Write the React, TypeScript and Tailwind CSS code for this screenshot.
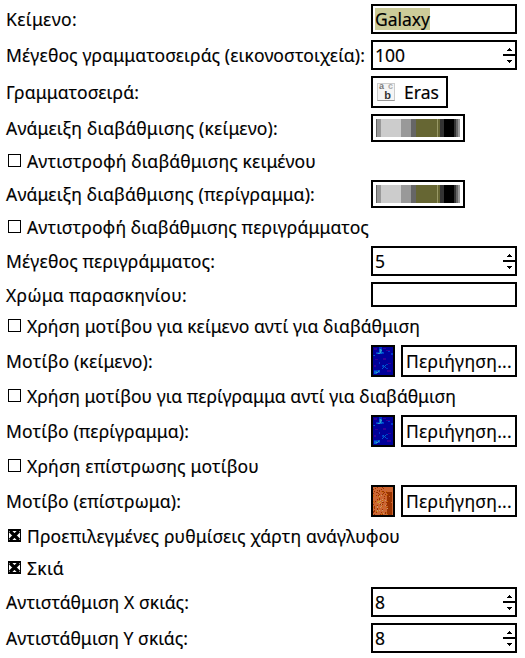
import { useLayoutEffect, useRef, useState } from 'react';
import type { ReactNode } from 'react';

function Label({ text, width }: { text: string; width: number }) {
  const ref = useRef<HTMLSpanElement>(null);
  const [spacing, setSpacing] = useState(0);
  useLayoutEffect(() => {
    if (ref.current) setSpacing((width - ref.current.getBoundingClientRect().width) / text.length);
  }, [text, width]);
  return (
    <span ref={ref} className="inline-block whitespace-pre leading-[26px]" style={{ letterSpacing: `${spacing}px` }}>
      {text}
    </span>
  );
}

function Row({ label, width, children }: { label: string; width: number; children: ReactNode }) {
  return (
    <div className="flex items-center">
      <div className="-my-1 w-[365px] shrink-0 h-[26px]">
        <Label text={label} width={width} />
      </div>
      {children}
    </div>
  );
}

function Check({ label, width, checked = false }: { label: string; width: number; checked?: boolean }) {
  return (
    <label className="flex h-[26px] items-center gap-[6px] pl-[2px]">
      <svg className="mb-px size-[13px] shrink-0" viewBox="0 0 13 13" shapeRendering="crispEdges">
        <path d="M.5.5h12v12H.5z" fill="white" stroke="black" />
        {checked && (
          <g shapeRendering="auto" stroke="black">
            <path d="M1 1.5h11M1 11.5h11" fill="none" strokeWidth="1" />
            <path d="M2 2l9 9M11 2l-9 9" strokeWidth="3.2" />
          </g>
        )}
      </svg>
      <Label text={label} width={width} />
    </label>
  );
}

function Spin({ value, width }: { value: string; width: number }) {
  return (
    <div className="flex h-[30px] w-[146px] items-center justify-between border-2 border-black pl-[2px]">
      <Label text={value} width={width} />
      <svg className="h-[26px] w-[12px]" viewBox="0 0 12 26" shapeRendering="crispEdges">
        <path d="M0 12h12v2H0zM6 6h1v1h1v1h1v1H4V8h1V7h1zM4 18h5v1H8v1H7v1H6v-1H5v-1H4z" />
      </svg>
    </div>
  );
}

function Gradient() {
  return (
    <div className="flex h-[28px] w-[94px] border-2 border-black p-[3px]">
      <div className="h-[18px] w-px bg-[#666]" />
      <div className="h-[18px] w-[4px] bg-[#999]" />
      <div className="h-[18px] w-[20px] bg-[#ccc]" />
      <div className="h-[18px] w-[10px] bg-[#999]" />
      <div className="h-[18px] w-[5px] bg-[#666]" />
      <div className="h-[18px] w-[21px] bg-[#663]" />
      <div className="h-[18px] w-px bg-[#996]" />
      <div className="h-[18px] w-[2px] bg-[#663]" />
      <div className="h-[18px] w-[4px] bg-[#333]" />
      <div className="h-[18px] w-[10px] bg-black" />
      <div className="h-[18px] w-[2px] bg-[#333]" />
      <div className="h-[18px] w-[2px] bg-[#666]" />
      <div className="h-[18px] w-[2px] bg-[#999]" />
    </div>
  );
}

function Browse({ rust = false }: { rust?: boolean }) {
  return (
    <div className="flex gap-[6px]">
      <div className="h-8 w-6 border-2 border-black">
        {rust ? <Rust /> : <Nebula />}
      </div>
      <button className="flex h-8 w-[116px] items-center border-2 border-black pl-[3px]">
        <Label text="Περιήγηση..." width={106} />
      </button>
    </div>
  );
}

function Nebula() {
  return (
    <svg className="h-7 w-5" viewBox="0 0 20 28" shapeRendering="crispEdges">
      <path fill="#000099" d="M0 0h20v28H0z" />
      <path fill="#330099" d="M1 1h3v2H1zM10 1h3v1h-3zM13 3h4v1h-4zM2 12h3v1H2zM10 11h3v2h-3zM15 16h3v1h-3zM1 18h2v2H1zM14 23h4v2h-4z" />
      <path fill="#0033cc" d="M6 0h3v2H6zM3 5h3v2H3zM0 8h2v1H0zM9 5h2v2H9zM15 4h2v1h-2zM18 6h2v2h-2zM6 15h1v2H6zM9 18h2v2H9zM13 17h2v1h-2zM1 23h6v3H1zM13 21h2v1h-2z" />
      <path fill="#0066cc" d="M6 2h3v5H6zM4 6h3v1H4zM1 8h1v1H1zM9 5h1v1H9zM10 18h1v1h-1zM11 19h1v1h-1zM12 20h1v1h-1zM12 18h1v1h-1zM9 21h1v1H9zM10 20h1v1h-1zM1 24h3v3H1zM5 23h2v2H5z" />
      <path fill="#3399cc" d="M7 2h1v4H7zM5 6h2v1H5zM8 3h1v1H8zM5 24h1v1H5zM3 25h2v1H3z" />
    </svg>
  );
}

function Rust() {
  const colors = ['#cc9933', '#cc6633', '#993300', '#cc9966', '#cc6600'];
  const cells: ReactNode[] = [];
  for (let y = 0; y < 28; y++) {
    for (let x = 0; x < 20; x++) {
      let h = (x * 73856093) ^ (y * 19349663);
      h = Math.imul(h ^ (h >>> 13), 1274126177);
      const n = ((h ^ (h >>> 16)) >>> 0) % 19;
      const light = x > 3 && x < 9 && y > 11 && y < 25;
      if (x < 15 ? n < 7 : n === 1) {
        const color = n === 0 && !light ? '#cc6633' : n > 4 ? (light ? '#cc9966' : '#993300') : colors[n];
        cells.push(<path key={`${x}-${y}`} fill={color} d={`M${x} ${y}h1v1h-1z`} />);
      }
    }
  }
  return (
    <svg className="h-7 w-5" viewBox="0 0 20 28" shapeRendering="crispEdges">
      <path fill="#cc6633" d="M0 0h20v28H0z" />
      <path fill="#993300" d="M14 5h5v23h-5z" />
      {cells}
    </svg>
  );
}

export default function App() {
  return (
    <main className="flex h-[658px] w-[525px] flex-col gap-[6px] bg-white pt-[4px] pl-[6px] font-['Noto_Sans',sans-serif] text-[17.5px] text-black [-webkit-text-stroke:0.15px_black]">
      <Row label="Κείμενο:" width={71}>
        <div className="flex h-[30px] w-[146px] items-center border-2 border-black pl-[2px]">
          <span className="flex h-[22px] items-center bg-[#cc9]">
            <Label text="Galaxy" width={55} />
          </span>
        </div>
      </Row>
      <Row label="Μέγεθος γραμματοσειράς (εικονοστοιχεία):" width={359}>
        <Spin value="100" width={30} />
      </Row>
      <Row label="Γραμματοσειρά:" width={133}>
        <button className="flex h-8 w-[77px] items-center gap-[9px] border-2 border-black pl-[4px]">
          <span className="flex size-[18px] flex-col items-center border border-[#ccc] border-b-[#999] bg-[#f5f5f5] font-['Liberation_Sans',sans-serif] font-bold [-webkit-text-stroke:0]">
            <span className="flex h-[7px] w-full justify-between px-px text-[9px] leading-[5px]">
              <span className="text-[#777]">a</span>
              <span className="text-[#aaa]">c</span>
            </span>
            <span className="h-[9px] pl-[3px] text-[11px] leading-[8px] text-[#333]">b</span>
          </span>
          <Label text="Eras" width={35} />
        </button>
      </Row>
      <Row label="Ανάμειξη διαβάθμισης (κείμενο):" width={272}><Gradient /></Row>
      <Check label="Αντιστροφή διαβάθμισης κειμένου" width={289} />
      <Row label="Ανάμειξη διαβάθμισης (περίγραμμα):" width={309}><Gradient /></Row>
      <Check label="Αντιστροφή διαβάθμισης περιγράμματος" width={342} />
      <Row label="Μέγεθος περιγράμματος:" width={209}><Spin value="5" width={10} /></Row>
      <Row label="Χρώμα παρασκηνίου:" width={181}>
        <div className="h-[25px] w-[146px] border-2 border-black" />
      </Row>
      <Check label="Χρήση μοτίβου για κείμενο αντί για διαβάθμιση" width={393} />
      <Row label="Μοτίβο (κείμενο):" width={147}><Browse /></Row>
      <Check label="Χρήση μοτίβου για περίγραμμα αντί για διαβάθμιση" width={429} />
      <Row label="Μοτίβο (περίγραμμα):" width={183}><Browse /></Row>
      <Check label="Χρήση επίστρωσης μοτίβου" width={232} />
      <Row label="Μοτίβο (επίστρωμα):" width={175}><Browse rust /></Row>
      <Check label="Προεπιλεγμένες ρυθμίσεις χάρτη ανάγλυφου" width={373} checked />
      <Check label="Σκιά" width={37} checked />
      <Row label="Αντιστάθμιση X σκιάς:" width={183}><Spin value="8" width={10} /></Row>
      <Row label="Αντιστάθμιση Y σκιάς:" width={182}><Spin value="8" width={10} /></Row>
    </main>
  );
}
